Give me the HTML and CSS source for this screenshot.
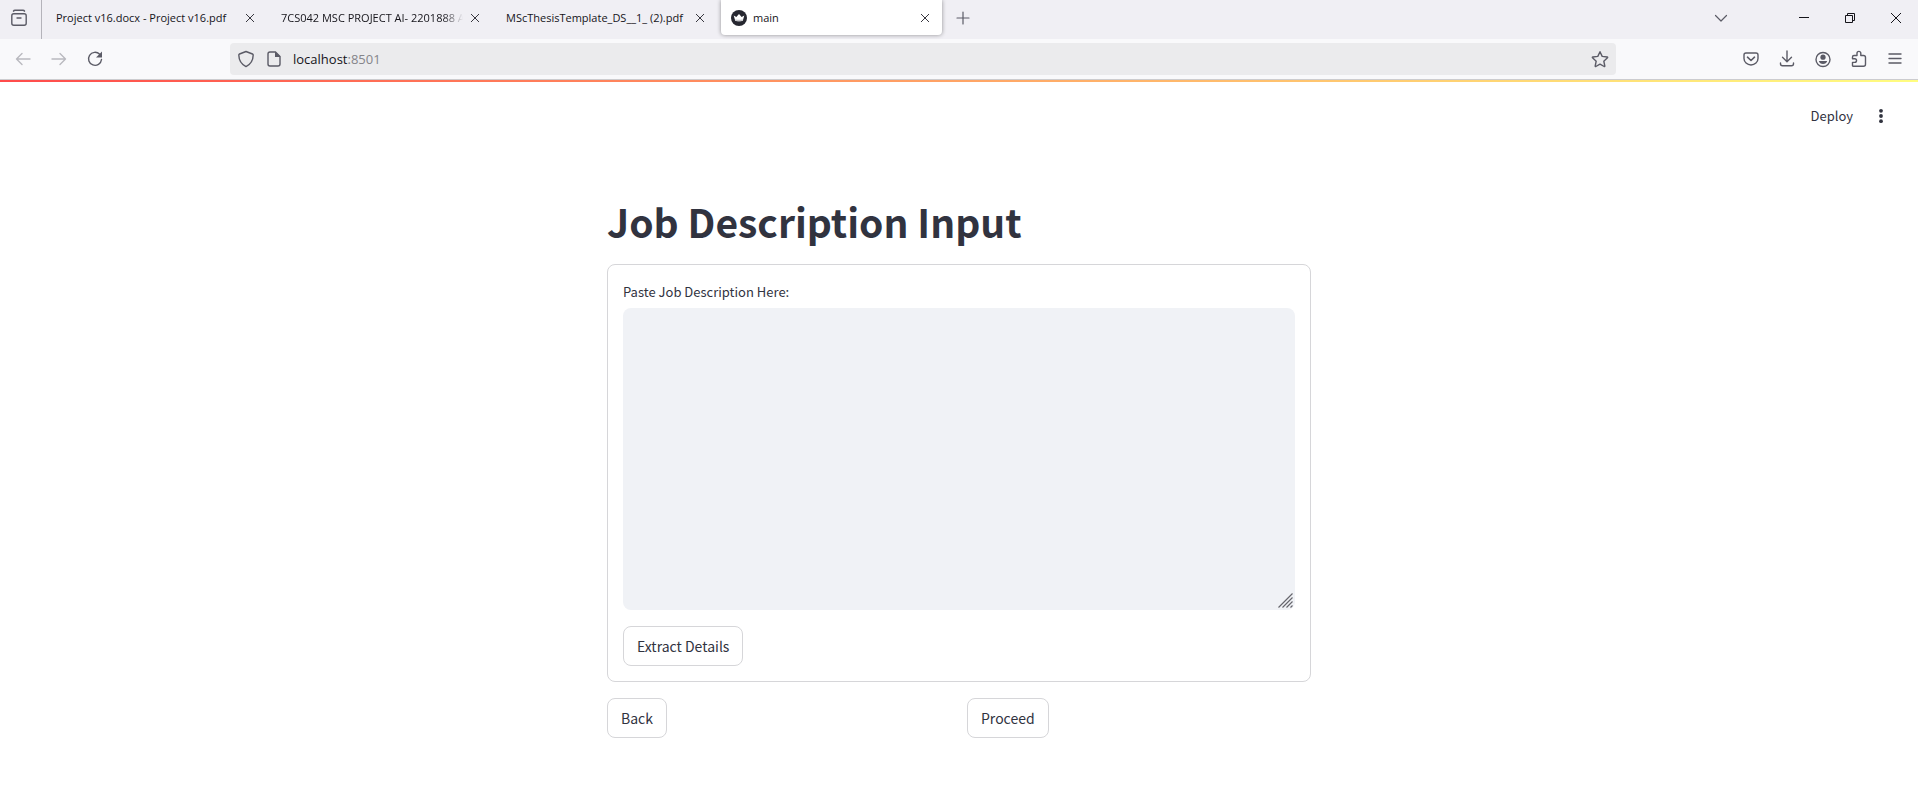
FILE: index.html
```html
<!DOCTYPE html>
<html lang="en">
<head>
<meta charset="utf-8">
<title>main</title>
<link rel="stylesheet" href="styles.css">
</head>
<body>
<header class="browser">
  <div class="tabbar">
    <button class="firefox-view" aria-label="Recent browsing"><svg class="icon" viewBox="0 0 18 18"><path d="M3.5 2.2c.3-.6.8-.9 1.500-.9h8c.7 0 1.200.3 1.500.9" stroke-width="1.500"/><rect x="1.800" y="4.800" width="14.400" height="11.400" rx="2"/><path d="M7 9h4"/></svg></button>
    <nav class="tabs" aria-label="Tabs">
      <div class="tab"><a href="#" class="tab-label">Project v16.docx - Project v16.pdf</a><button class="tab-close" aria-label="Close tab"><svg viewBox="0 0 10 10"><path d="M1 1l8 8M9 1L1 9"/></svg></button></div>
      <div class="tab"><a href="#" class="tab-label tab-faded">7CS042 MSC PROJECT AI- 2201888 A</a><button class="tab-close" aria-label="Close tab"><svg viewBox="0 0 10 10"><path d="M1 1l8 8M9 1L1 9"/></svg></button></div>
      <div class="tab"><a href="#" class="tab-label">MScThesisTemplate_DS__1_ (2).pdf</a><button class="tab-close" aria-label="Close tab"><svg viewBox="0 0 10 10"><path d="M1 1l8 8M9 1L1 9"/></svg></button></div>
      <div class="tab tab-active"><svg class="favicon" viewBox="0 0 16 16"><circle cx="8" cy="8" r="8" fill="#262730"/><path d="M2.700 5.400l2.600 1.500L8 3.900l2.700 3 2.600-1.500-1.500 5.400c-2.300.7-5.300.7-7.600 0z" fill="#fff"/><path d="M4.200 9.300c2.500.7 5.100.7 7.600 0l-.4 1.500c-2.200.6-4.600.6-6.800 0z" fill="#c4c4c8"/></svg><a href="#" class="tab-label">main</a><button class="tab-close" aria-label="Close tab"><svg viewBox="0 0 10 10"><path d="M1 1l8 8M9 1L1 9"/></svg></button></div>
    </nav>
    <button class="tool" aria-label="New tab"><svg class="icon thin" viewBox="0 0 18 18"><path d="M9 3v12M3 9h12"/></svg></button>
    <button class="tool all-tabs" aria-label="List all tabs"><svg class="icon thin" viewBox="0 0 18 18"><path d="M3.500 6.500L9 12l5.500-5.500"/></svg></button>
    <div class="window-controls">
      <button class="win" aria-label="Minimize"><svg viewBox="0 0 12 12"><path d="M1 5.500h10"/></svg></button>
      <button class="win" aria-label="Restore"><svg viewBox="0 0 12 12"><path d="M1.500 3.500h7v7h-7zM3.500 3.500v-2h7v7h-2"/></svg></button>
      <button class="win" aria-label="Close"><svg viewBox="0 0 12 12"><path d="M1 1l10 10M11 1L1 11"/></svg></button>
    </div>
  </div>
  <div class="toolbar">
    <button class="tool" aria-label="Back" disabled><svg class="icon" viewBox="0 0 18 18"><path d="M16 9H2.500M8 3.500L2.500 9 8 14.500"/></svg></button>
    <button class="tool" aria-label="Forward" disabled><svg class="icon" viewBox="0 0 18 18"><path d="M2 9h13.500M10 3.500L15.500 9 10 14.500"/></svg></button>
    <button class="tool" aria-label="Reload"><svg class="icon" viewBox="0 0 18 18"><path d="M13.700 4.300A6.500 6.500 0 1 0 15.500 9.500"/><path class="solid" d="M16 1.500v6h-6z"/></svg></button>
    <div class="urlbar">
      <svg class="icon" viewBox="0 0 18 18"><path d="M9 1.500L15.500 4c.5.200.7.500.7 1-.1 5-2 9-7.200 11.600C3.800 14 1.900 10 1.800 5c0-.5.200-.8.700-1z"/></svg>
      <svg class="icon" viewBox="0 0 18 18"><path d="M10.500 2H5a2 2 0 0 0-2 2v10a2 2 0 0 0 2 2h8a2 2 0 0 0 2-2V6.500z"/><path class="solid" d="M10 1.500l5.500 5.500H10z"/></svg>
      <a href="#" class="url">localhost<span class="port">:8501</span></a>
      <button class="bookmark" aria-label="Bookmark this page"><svg class="icon" viewBox="0 0 18 18"><path d="M9 1.700l2.200 4.700 5 .6c.5.100.6.500.3.800l-3.700 3.400 1 4.800c.1.500-.2.700-.6.500L9 14.200l-4.200 2.300c-.4.200-.7 0-.6-.5l1-4.800L1.500 7.800c-.3-.3-.2-.7.300-.8l5-.6z"/></svg></button>
    </div>
    <button class="tool" aria-label="Pocket"><svg class="icon" viewBox="0 0 18 18"><path d="M4 3h10a2 2 0 0 1 2 2v3.500a7 6.500 0 0 1-14 0V5a2 2 0 0 1 2-2z"/><path d="M5.500 7.200L9 10.500l3.500-3.300" stroke-width="1.600"/></svg></button>
    <button class="tool" aria-label="Downloads"><svg class="icon" viewBox="0 0 18 18"><path d="M9 1v10.500M4.500 7.200L9 11.700l4.500-4.500M2.500 13v.8a2 2 0 0 0 2 2h9a2 2 0 0 0 2-2V13"/></svg></button>
    <button class="tool" aria-label="Account"><svg class="icon" viewBox="0 0 18 18"><circle cx="9" cy="9.500" r="7"/><circle class="solid" cx="9" cy="7.200" r="2.600"/><path class="solid" d="M4.800 10.900h8.400c-.5 2-2 3-4.200 3s-3.700-1-4.200-3z"/></svg></button>
    <button class="tool" aria-label="Extensions"><svg class="icon" viewBox="0 0 18 18"><path d="M3 16.200h10.500a2 2 0 0 0 2-2V7.500a2 2 0 0 0-2-2h-2.700V3.300a1.900 1.900 0 0 0-3.800 0v2.200H4a1.500 1.500 0 0 0-1.500 1.500v1.700h2.200a1.800 1.800 0 0 1 0 3.700H2.500v3.300z"/></svg></button>
    <button class="tool" aria-label="Menu"><svg class="icon" viewBox="0 0 18 18"><path d="M3 4h12M3 8.500h12M3 13h12"/></svg></button>
  </div>
</header>
<div class="decoration"></div>
<div class="app-header">
  <button class="deploy">Deploy</button>
  <button class="more" aria-label="More options"><svg viewBox="0 0 16 16"><circle cx="8" cy="2.800" r="1.900"/><circle cx="8" cy="8" r="1.900"/><circle cx="8" cy="13.200" r="1.900"/></svg></button>
</div>
<main class="content">
  <h1 class="title">Job Description Input</h1>
  <form class="card">
    <label class="label" for="job">Paste Job Description Here:</label>
    <div class="field">
      <textarea id="job" class="textarea"></textarea>
      <svg class="grip" viewBox="0 0 15 15"><path d="M.5 14.500l14-14M4.500 14.500l10-10M8.500 14.500l6-6M12.500 14.500l2-2"/></svg>
    </div>
    <button type="button" class="btn">Extract Details</button>
  </form>
  <div class="actions">
    <div><button class="btn">Back</button></div>
    <div><button class="btn">Proceed</button></div>
  </div>
</main>
</body>
</html>
```
FILE: styles.css
```css
* { box-sizing: border-box; }
body {
  margin: 0;
  background: #fff;
  color: #31333f;
  font-family: "Noto Sans CJK JP", "Noto Sans", sans-serif;
}
button {
  margin: 0;
  padding: 0;
  border: 0;
  background: none;
  color: inherit;
  font: inherit;
}
a { color: inherit; text-decoration: none; }
svg { display: block; flex: none; fill: none; }

/* Browser chrome */
.browser {
  color: #15141a;
  font-family: "Open Sans", "Noto Sans", sans-serif;
  border-bottom: 1px solid #cccccf;
}
.tabbar {
  display: flex;
  align-items: center;
  height: 39px;
  padding-bottom: 4px;
  background: #f0eff4;
}
.icon {
  width: 18px;
  height: 18px;
  stroke: #5b5b66;
  stroke-width: 1.4;
  stroke-linecap: round;
  stroke-linejoin: round;
}
.thin { stroke-width: 1.2; }
.solid { fill: #5b5b66; stroke: none; }
.firefox-view {
  display: flex;
  align-items: center;
  width: 42px;
  height: 39px;
  margin-bottom: -4px;
  padding: 0 0 4px 10px;
  border-right: 1px solid #b4b3ba;
}
.tabs {
  display: flex;
  gap: 4px;
  align-self: stretch;
  padding: 0 3px 0 4px;
}
.tab {
  display: flex;
  align-items: center;
  width: 221px;
  padding: 0 9px 0 10px;
  font-size: 11px;
  line-height: 16px;
}
.tab-active {
  background: #fff;
  border-radius: 0 0 4px 4px;
  box-shadow: 0 0 4px rgba(0, 0, 0, 0.4);
}
.tab-label {
  flex: 1;
  min-width: 0;
  white-space: nowrap;
}
.tab-faded {
  -webkit-mask-image: linear-gradient(to left, transparent 4px, #000 24px);
  mask-image: linear-gradient(to left, transparent 4px, #000 24px);
}
.favicon { width: 16px; height: 16px; margin-right: 6px; }
.tab-close { width: 16px; height: 16px; padding: 3px; }
.tab-close svg { width: 10px; height: 10px; stroke: #38373f; }
.tool {
  display: flex;
  align-items: center;
  justify-content: center;
  width: 36px;
  height: 36px;
}
.tool:disabled { opacity: 0.4; }
.all-tabs { margin-left: auto; }
.window-controls { display: flex; margin-left: 42px; }
.win { width: 46px; padding: 0 17px; }
.win:last-child { width: 45px; padding-right: 16px; }
.win svg { width: 12px; height: 12px; stroke: #15141a; }
.toolbar {
  display: flex;
  align-items: center;
  height: 40px;
  padding: 0 5px;
  background: #f9f9fb;
}
.urlbar {
  display: flex;
  flex: 1;
  align-items: center;
  gap: 10px;
  height: 32px;
  margin: 0 117px;
  padding: 0 7px;
  border-radius: 4px;
  background: #ebebed;
}
.url {
  flex: 1;
  font-size: 13px;
  line-height: 20px;
}
.port { color: #85858a; }

/* Application */
.decoration {
  height: 2px;
  background: linear-gradient(90deg, #ff4b4b, #fffd80);
}
.app-header {
  display: flex;
  justify-content: flex-end;
  align-items: center;
  gap: 20px;
  height: 68px;
  padding-right: 29px;
}
.deploy { font-size: 13px; line-height: 20px; }
.more { padding: 0; }
.more svg { width: 16px; height: 16px; fill: #31333f; }
.content {
  max-width: 704px;
  margin: 0 auto;
  padding: 45px 0 48px;
}
.title {
  margin: 0 0 16px;
  font-size: 39px;
  font-weight: 700;
  line-height: 53px;
}
.card {
  margin: 0 0 16px;
  padding: 15px;
  border: 1px solid #d6d6d9;
  border-radius: 8px;
}
.label {
  display: block;
  margin-bottom: 4px;
  font-size: 13px;
  line-height: 24px;
}
.field { position: relative; margin-bottom: 16px; }
.textarea {
  display: block;
  width: 100%;
  height: 302px;
  padding: 16px;
  border: 0;
  border-radius: 8px;
  background: #f0f2f6;
  color: inherit;
  font: inherit;
  resize: none;
}
.grip {
  position: absolute;
  right: 2px;
  bottom: 2px;
  width: 15px;
  height: 15px;
  stroke: #66666d;
  stroke-width: 1.2;
}
.btn {
  height: 40px;
  padding: 0 13px;
  border: 1px solid #d6d6d9;
  border-radius: 8px;
  background: #fff;
  font-size: 14px;
  line-height: 24px;
}
.actions {
  display: grid;
  grid-template-columns: 1fr 1fr;
  gap: 16px;
}
```
